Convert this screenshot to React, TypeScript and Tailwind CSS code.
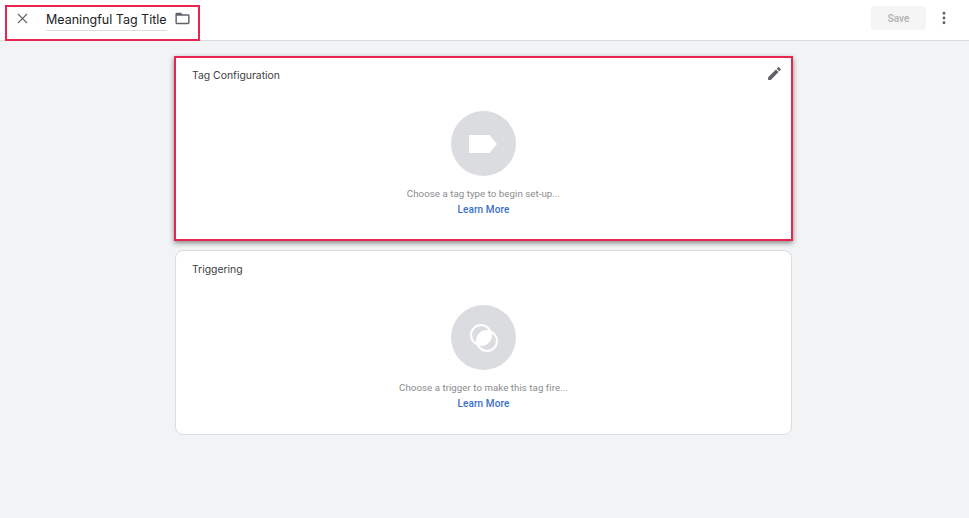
import type { ReactNode } from "react"
import { MoreVertical, X } from "lucide-react"

// folder outline, matches the GTM workspace folder glyph
function FolderIcon() {
    return (
        <svg width="17" height="17" viewBox="0 0 24 24" fill="#5f6368">
            <path d="M20 6h-8l-2-2H4c-1.1 0-2 .9-2 2v12c0 1.1.9 2 2 2h16c1.1 0 2-.9 2-2V8c0-1.1-.9-2-2-2zm0 12H4V8h16v10z" />
        </svg>
    )
}

function PencilIcon() {
    return (
        <svg width="17" height="17" viewBox="0 0 24 24" fill="#5f6368">
            <path d="M3 17.25V21h3.75L17.81 9.94l-3.75-3.75L3 17.25zM20.71 7.04c.39-.39.39-1.02 0-1.41l-2.34-2.34c-.39-.39-1.02-.39-1.41 0l-1.83 1.83 3.75 3.75 1.83-1.83z" />
        </svg>
    )
}

function TagIcon() {
    return (
        <svg width="29" height="18" viewBox="0 0 29 18" fill="#ffffff">
            <path d="M0 0h20.5l7.5 9-7.5 9H0z" />
        </svg>
    )
}

function TriggerIcon() {
    return (
        <svg width="28" height="28" viewBox="0 0 28 28" fill="none">
            <clipPath id="lens">
                <circle cx="11" cy="11" r="10" />
            </clipPath>
            <circle cx="17" cy="17" r="10" fill="#ffffff" clipPath="url(#lens)" />
            <circle cx="11" cy="11" r="10" stroke="#ffffff" strokeWidth="2" />
            <circle cx="17" cy="17" r="10" stroke="#ffffff" strokeWidth="2" />
        </svg>
    )
}

type CardProps = {
    title: string
    hint: string
    icon: ReactNode
    highlighted?: boolean
}

function Card({ title, hint, icon, highlighted }: CardProps) {
    const frame = highlighted
        ? "w-[619px] h-[185px] border-2 border-[#e8254f] shadow-[0_2px_5px_rgba(0,0,0,0.45)] pt-[10px]"
        : "w-[617px] h-[185px] border border-[#dadce0] rounded-lg pt-[11px]"
    return (
        <section className={`bg-white flex flex-col px-[8px] ${frame}`}>
            <div className="flex items-start justify-between h-[18px] pl-[8px]">
                <h2 className="text-[10.4px] leading-[16px] text-[#3c4043] font-['Inter',sans-serif]">{title}</h2>
                {highlighted && (
                    <span className="-mt-[3px]">
                        <PencilIcon />
                    </span>
                )}
            </div>
            <div className="flex flex-col items-center mt-[25px]">
                <div className="w-[65px] h-[65px] rounded-full bg-[#dadce0] flex items-center justify-center">{icon}</div>
                <p className="mt-[11px] text-[9.7px] leading-[14px] text-[#8a8c8e] tracking-[0.05px]">{hint}</p>
                <a className="mt-[2px] text-[10px] leading-[14px] font-medium text-[#3b70c9] tracking-[0.1px]">Learn More</a>
            </div>
        </section>
    )
}

export default function App() {
    return (
        <main className="w-[969px] h-[518px] overflow-hidden bg-[#f1f3f4] font-['Roboto',sans-serif]">
            <header className="h-[41px] bg-white border-b border-[#dadce0] flex items-start justify-between">
                <div className="ml-[5px] mt-[5px] w-[195px] h-[36px] border-2 border-[#e8254f] flex items-start pt-[3px] bg-white">
                    <X size={17} strokeWidth={1.5} className="text-[#5f6368] ml-[7px]" />
                    <div className="ml-[15px] w-[121px] h-[21px] border-b border-[#dadce0] text-[12.5px] leading-[20px] text-[#202124] font-['Inter',sans-serif] whitespace-nowrap">
                        Meaningful Tag Title
                    </div>
                    <span className="ml-[7px]">
                        <FolderIcon />
                    </span>
                </div>
                <div className="flex items-center h-[36px] mr-[17px]">
                    <button className="w-[55px] h-[24px] rounded-[3px] bg-[#f5f5f5] text-[10px] font-medium text-[#b0b0b0]">
                        Save
                    </button>
                    <MoreVertical size={16} strokeWidth={2.4} className="ml-[10px] text-[#5f6368]" />
                </div>
            </header>
            <div className="flex flex-col items-center pt-[15px] pr-[2px] gap-[9px]">
                <Card title="Tag Configuration" hint="Choose a tag type to begin set-up..." icon={<TagIcon />} highlighted />
                <Card title="Triggering" hint="Choose a trigger to make this tag fire..." icon={<TriggerIcon />} />
            </div>
        </main>
    )
}
